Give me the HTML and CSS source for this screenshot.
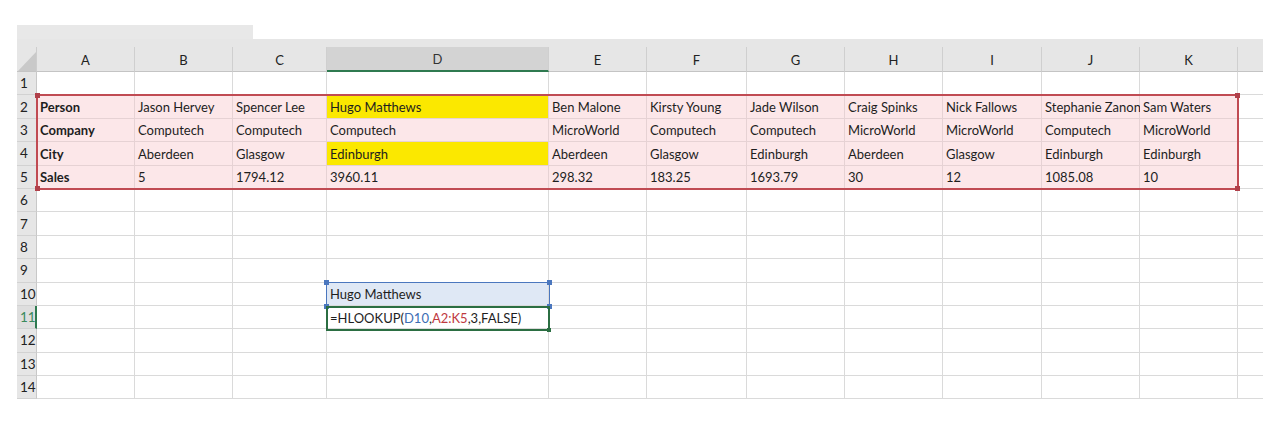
FILE: index.html
```html
<!DOCTYPE html>
<html>
<head>
<meta charset="utf-8">
<link rel="stylesheet" href="styles.css">
</head>
<body>
<div class="tabstrip"></div>
<div class="band"></div>
<div class="grid">
  <div class="corner"><svg width="20" height="25" viewBox="0 0 20 25"><polygon points="1,24 19,5 19,24" fill="#c9c9c9"/></svg></div>
  <div class="ch">A</div><div class="ch">B</div><div class="ch">C</div><div class="ch sel">D</div><div class="ch">E</div><div class="ch">F</div><div class="ch">G</div><div class="ch">H</div><div class="ch">I</div><div class="ch">J</div><div class="ch">K</div><div class="ch last"></div>

  <div class="rh">1</div><div class="c"></div><div class="c"></div><div class="c"></div><div class="c"></div><div class="c"></div><div class="c"></div><div class="c"></div><div class="c"></div><div class="c"></div><div class="c"></div><div class="c"></div><div class="c last"></div>

  <div class="rh">2</div><div class="c pk b">Person</div><div class="c pk">Jason Hervey</div><div class="c pk">Spencer Lee</div><div class="c yl">Hugo Matthews</div><div class="c pk">Ben Malone</div><div class="c pk">Kirsty Young</div><div class="c pk">Jade Wilson</div><div class="c pk">Craig Spinks</div><div class="c pk">Nick Fallows</div><div class="c pk">Stephanie Zanon</div><div class="c pk">Sam Waters</div><div class="c last"></div>

  <div class="rh">3</div><div class="c pk b">Company</div><div class="c pk">Computech</div><div class="c pk">Computech</div><div class="c pk">Computech</div><div class="c pk">MicroWorld</div><div class="c pk">Computech</div><div class="c pk">Computech</div><div class="c pk">MicroWorld</div><div class="c pk">MicroWorld</div><div class="c pk">Computech</div><div class="c pk">MicroWorld</div><div class="c last"></div>

  <div class="rh">4</div><div class="c pk b">City</div><div class="c pk">Aberdeen</div><div class="c pk">Glasgow</div><div class="c yl">Edinburgh</div><div class="c pk">Aberdeen</div><div class="c pk">Glasgow</div><div class="c pk">Edinburgh</div><div class="c pk">Aberdeen</div><div class="c pk">Glasgow</div><div class="c pk">Edinburgh</div><div class="c pk">Edinburgh</div><div class="c last"></div>

  <div class="rh">5</div><div class="c pk b">Sales</div><div class="c pk">5</div><div class="c pk">1794.12</div><div class="c pk">3960.11</div><div class="c pk">298.32</div><div class="c pk">183.25</div><div class="c pk">1693.79</div><div class="c pk">30</div><div class="c pk">12</div><div class="c pk">1085.08</div><div class="c pk">10</div><div class="c last"></div>

  <div class="rh">6</div><div class="c"></div><div class="c"></div><div class="c"></div><div class="c"></div><div class="c"></div><div class="c"></div><div class="c"></div><div class="c"></div><div class="c"></div><div class="c"></div><div class="c"></div><div class="c last"></div>
  <div class="rh">7</div><div class="c"></div><div class="c"></div><div class="c"></div><div class="c"></div><div class="c"></div><div class="c"></div><div class="c"></div><div class="c"></div><div class="c"></div><div class="c"></div><div class="c"></div><div class="c last"></div>
  <div class="rh">8</div><div class="c"></div><div class="c"></div><div class="c"></div><div class="c"></div><div class="c"></div><div class="c"></div><div class="c"></div><div class="c"></div><div class="c"></div><div class="c"></div><div class="c"></div><div class="c last"></div>
  <div class="rh">9</div><div class="c"></div><div class="c"></div><div class="c"></div><div class="c"></div><div class="c"></div><div class="c"></div><div class="c"></div><div class="c"></div><div class="c"></div><div class="c"></div><div class="c"></div><div class="c last"></div>

  <div class="rh">10</div><div class="c"></div><div class="c"></div><div class="c"></div><div class="c lb">Hugo Matthews</div><div class="c"></div><div class="c"></div><div class="c"></div><div class="c"></div><div class="c"></div><div class="c"></div><div class="c"></div><div class="c last"></div>

  <div class="rh act">11</div><div class="c"></div><div class="c"></div><div class="c"></div><div class="c">=HLOOKUP(<span class="ref-b">D10</span>,<span class="ref-r">A2:K5</span>,3,FALSE)</div><div class="c"></div><div class="c"></div><div class="c"></div><div class="c"></div><div class="c"></div><div class="c"></div><div class="c"></div><div class="c last"></div>

  <div class="rh">12</div><div class="c"></div><div class="c"></div><div class="c"></div><div class="c"></div><div class="c"></div><div class="c"></div><div class="c"></div><div class="c"></div><div class="c"></div><div class="c"></div><div class="c"></div><div class="c last"></div>
  <div class="rh">13</div><div class="c"></div><div class="c"></div><div class="c"></div><div class="c"></div><div class="c"></div><div class="c"></div><div class="c"></div><div class="c"></div><div class="c"></div><div class="c"></div><div class="c"></div><div class="c last"></div>
  <div class="rh">14</div><div class="c"></div><div class="c"></div><div class="c"></div><div class="c"></div><div class="c"></div><div class="c"></div><div class="c"></div><div class="c"></div><div class="c"></div><div class="c"></div><div class="c"></div><div class="c last"></div>

  <div class="range"><span class="h tl"></span><span class="h tr"></span><span class="h bl"></span><span class="h br"></span></div>
  <div class="refbox"><span class="h tl"></span><span class="h tr"></span><span class="h bl"></span><span class="h br"></span></div>
  <div class="editbox"><span class="h br"></span></div>
</div>
</body>
</html>
```
FILE: styles.css
```css
* { box-sizing: border-box; }
body {
  margin: 0;
  background: #fff;
  font-family: Lato, "Open Sans", "Liberation Sans", sans-serif;
  color: #1e1e1e;
}
.tabstrip {
  margin: 25px 0 0 17px;
  width: 236px;
  height: 14px;
  background: #e8e8e8;
}
.band {
  margin-left: 17px;
  width: 1246px;
  height: 8px;
  background: #e6e6e6;
}
.grid {
  position: relative;
  margin-left: 17px;
  width: 1246px;
  display: grid;
  grid-template-columns: 20px 98px 98px 94px 222px 98px 100px 98px 98px 99px 98px 98px 25px;
  grid-template-rows: 25px repeat(14, 23.4px);
}
.corner {
  background: #e6e6e6;
  border-right: 1px solid #cdcdcd;
  border-bottom: 1px solid #c4c4c4;
}
.corner svg { display: block; }
.ch {
  background: #e6e6e6;
  border-right: 1px solid #cfcfcf;
  border-bottom: 1px solid #c4c4c4;
  display: flex;
  align-items: center;
  justify-content: center;
  font-size: 13px;
  color: #222;
  padding-top: 1px;
}
.ch.sel {
  background: #d3d3d3;
  color: #333;
  border-bottom: 2px solid #2f7a50;
}
.ch.last { border-right: none; }
.rh {
  background: #e6e6e6;
  border-right: 1px solid #c8c8c8;
  border-bottom: 1px solid #d2d2d2;
  font-size: 13.5px;
  color: #222;
  padding-left: 3px;
  display: flex;
  align-items: center;
}
.rh.act {
  color: #3b8a5c;
  background: #dedede;
  border-right: 2px solid #2f7a50;
}
.c {
  border-right: 1px solid #dadada;
  border-bottom: 1px solid #dadada;
  font-size: 13px;
  padding: 1px 2px 0 3px;
  display: flex;
  align-items: center;
  white-space: nowrap;
  overflow: visible;
  min-width: 0;
}
.c.last { border-right: none; }
.b { font-weight: 700; }
.pk { background: #fce7e9; border-color: #e6d2d4; }
.yl { background: #fbe800; border-color: #e6d2d4; }
.lb { background: #dfe8f5; }
.ref-b { color: #3c6db3; }
.ref-r { color: #c0393f; }

.range, .refbox, .editbox {
  position: absolute;
  pointer-events: none;
}
.range {
  left: 19px;
  top: 47.4px;
  width: 1203px;
  height: 95.6px;
  border: 2px solid #c04b53;
}
.refbox {
  left: 309px;
  top: 235px;
  width: 224px;
  height: 25px;
  border: 1px solid #4b77be;
}
.editbox {
  left: 309px;
  top: 258.5px;
  width: 224px;
  height: 25px;
  border: 2px solid #2b6e42;
}
.h {
  position: absolute;
  width: 5px;
  height: 5px;
}
.range .h { background: #b0404a; }
.refbox .h { background: #4b77be; }
.editbox .h { background: #2b6e42; }
.range .tl { left: -3px; top: -3px; }
.range .tr { right: -3px; top: -3px; }
.range .bl { left: -3px; bottom: -3px; }
.range .br { right: -3px; bottom: -3px; }
.refbox .tl { left: -3px; top: -3px; }
.refbox .tr { right: -3px; top: -3px; }
.refbox .bl { left: -3px; bottom: -3px; }
.refbox .br { right: -3px; bottom: -3px; }
.editbox .br { right: -3px; bottom: -3px; width: 4px; height: 4px; }
```
